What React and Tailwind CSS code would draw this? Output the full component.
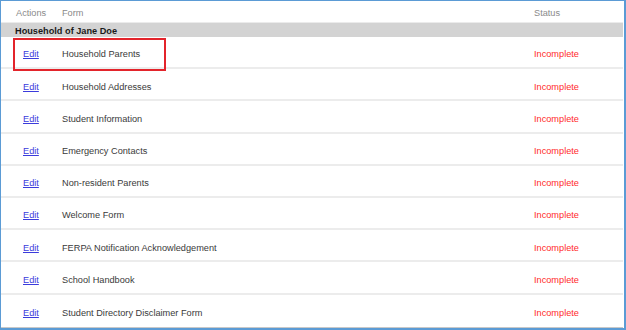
import React from "react";

const rows = [
  "Household Parents",
  "Household Addresses",
  "Student Information",
  "Emergency Contacts",
  "Non-resident Parents",
  "Welcome Form",
  "FERPA Notification Acknowledgement",
  "School Handbook",
  "Student Directory Disclaimer Form",
];

export default function App() {
  return (
    <div
      className="w-[626px] h-[330px] bg-white overflow-hidden border-t border-l border-r-2 border-b-2 border-[#5b9bd5] text-[9.2px] leading-none"
      style={{ fontFamily: '"Liberation Sans", Arial, sans-serif' }}
    >
      <div className="flex flex-col w-[622px] border-b border-[#c8c8c8] h-[327px]">
        <div className="flex items-center h-[22px] pt-[5px] border-b border-[#ebebeb] text-[#8a8a8a] shrink-0">
          <div className="w-[61px] pl-[15px]">Actions</div>
          <div className="w-[472px]">Form</div>
          <div>Status</div>
        </div>
        <div className="flex items-center h-[14px] pt-[4px] bg-[#d3d3d3] pl-[14px] font-bold text-[#1a1a1a] shrink-0">
          Household of Jane Doe
        </div>
        {rows.map((r, i) => (
          <div
            key={r}
            className={
              "relative flex items-center h-[32.2px] pt-[6px] shrink-0 text-[#3a3a3a] " +
              (i < rows.length - 1 ? "border-b-2 border-[#ececec]" : "")
            }
          >
            <div className="w-[61px] pl-[22px]">
              <span className="text-[#3b3bdc] underline">Edit</span>
            </div>
            <div className="w-[472px]">{r}</div>
            <div className="text-[#ff2b2b]">Incomplete</div>
            {i === 0 && (
              <div className="absolute left-[12px] top-[1px] w-[153px] h-[33px] border-2 border-[#e3242b]" />
            )}
          </div>
        ))}
      </div>
    </div>
  );
}
